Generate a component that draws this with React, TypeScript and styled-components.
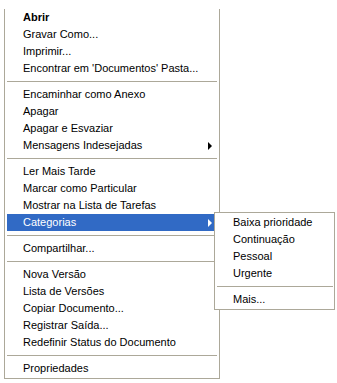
import React from 'react';
import styled, { createGlobalStyle } from 'styled-components';

const GlobalStyle = createGlobalStyle`
  body {
    margin: 0;
    background: #ffffff;
    font-family: "Liberation Sans", Arial, sans-serif;
  }
`;

const Page = styled.div`
  position: relative;
  width: 337px;
  height: 383px;
  overflow: hidden;
  background: #ffffff;
`;

const Menu = styled.div`
  position: relative;
  margin: 9px 0 0 4px;
  width: 207px;
  border: 1px solid #aca899;
  border-top: none;
  padding: 0 5px 1px 2px;
  background: #ffffff;
`;

const SubMenu = styled.div`
  position: absolute;
  left: 214px;
  top: 212px;
  width: 116px;
  border: 1px solid #aca899;
  padding: 1px 1px 1px 2px;
  background: #ffffff;
`;

const Item = styled.div<{ $active?: boolean; $bold?: boolean }>`
  position: relative;
  height: 17px;
  line-height: 17px;
  padding-left: 16px;
  font-size: 11px;
  font-weight: ${(p) => (p.$bold ? 700 : 400)};
  color: ${(p) => (p.$active ? '#ffffff' : '#000000')};
  background: ${(p) => (p.$active ? '#316ac5' : 'transparent')};
  white-space: nowrap;
`;

const Separator = styled.div<{ $wide?: boolean }>`
  height: 9px;
  display: flex;
  align-items: center;
  margin-right: ${(p) => (p.$wide ? '-3px' : '0')};
  &::after {
    content: '';
    flex: 1;
    height: 1px;
    background: #aca899;
  }
`;

const Arrow = styled.span<{ $light?: boolean }>`
  position: absolute;
  right: 2px;
  top: 5px;
  width: 0;
  height: 0;
  border-top: 4px solid transparent;
  border-bottom: 4px solid transparent;
  border-left: 4px solid ${(p) => (p.$light ? '#ffffff' : '#000000')};
`;

type Entry = { label?: string; bold?: boolean; sub?: boolean; active?: boolean; sep?: boolean };

const mainEntries: Entry[] = [
  { label: 'Abrir', bold: true },
  { label: 'Gravar Como...' },
  { label: 'Imprimir...' },
  { label: "Encontrar em 'Documentos' Pasta..." },
  { sep: true },
  { label: 'Encaminhar como Anexo' },
  { label: 'Apagar' },
  { label: 'Apagar e Esvaziar' },
  { label: 'Mensagens Indesejadas', sub: true },
  { sep: true },
  { label: 'Ler Mais Tarde' },
  { label: 'Marcar como Particular' },
  { label: 'Mostrar na Lista de Tarefas' },
  { label: 'Categorias', sub: true, active: true },
  { sep: true },
  { label: 'Compartilhar...' },
  { sep: true },
  { label: 'Nova Versão' },
  { label: 'Lista de Versões' },
  { label: 'Copiar Documento...' },
  { label: 'Registrar Saída...' },
  { label: 'Redefinir Status do Documento' },
  { sep: true },
  { label: 'Propriedades' },
];

const categoryEntries: Entry[] = [
  { label: 'Baixa prioridade' },
  { label: 'Continuação' },
  { label: 'Pessoal' },
  { label: 'Urgente' },
  { sep: true },
  { label: 'Mais...' },
];

const renderEntries = (entries: Entry[], wideSeparators = false) =>
  entries.map((e, i) =>
    e.sep ? (
      <Separator key={i} $wide={wideSeparators} />
    ) : (
      <Item key={i} $active={e.active} $bold={e.bold}>
        {e.label}
        {e.sub && <Arrow $light={e.active} />}
      </Item>
    )
  );

const App: React.FC = () => {
  return (
    <Page>
      <GlobalStyle />
      <Menu>{renderEntries(mainEntries, true)}</Menu>
      <SubMenu>{renderEntries(categoryEntries)}</SubMenu>
    </Page>
  );
};

export default App;
